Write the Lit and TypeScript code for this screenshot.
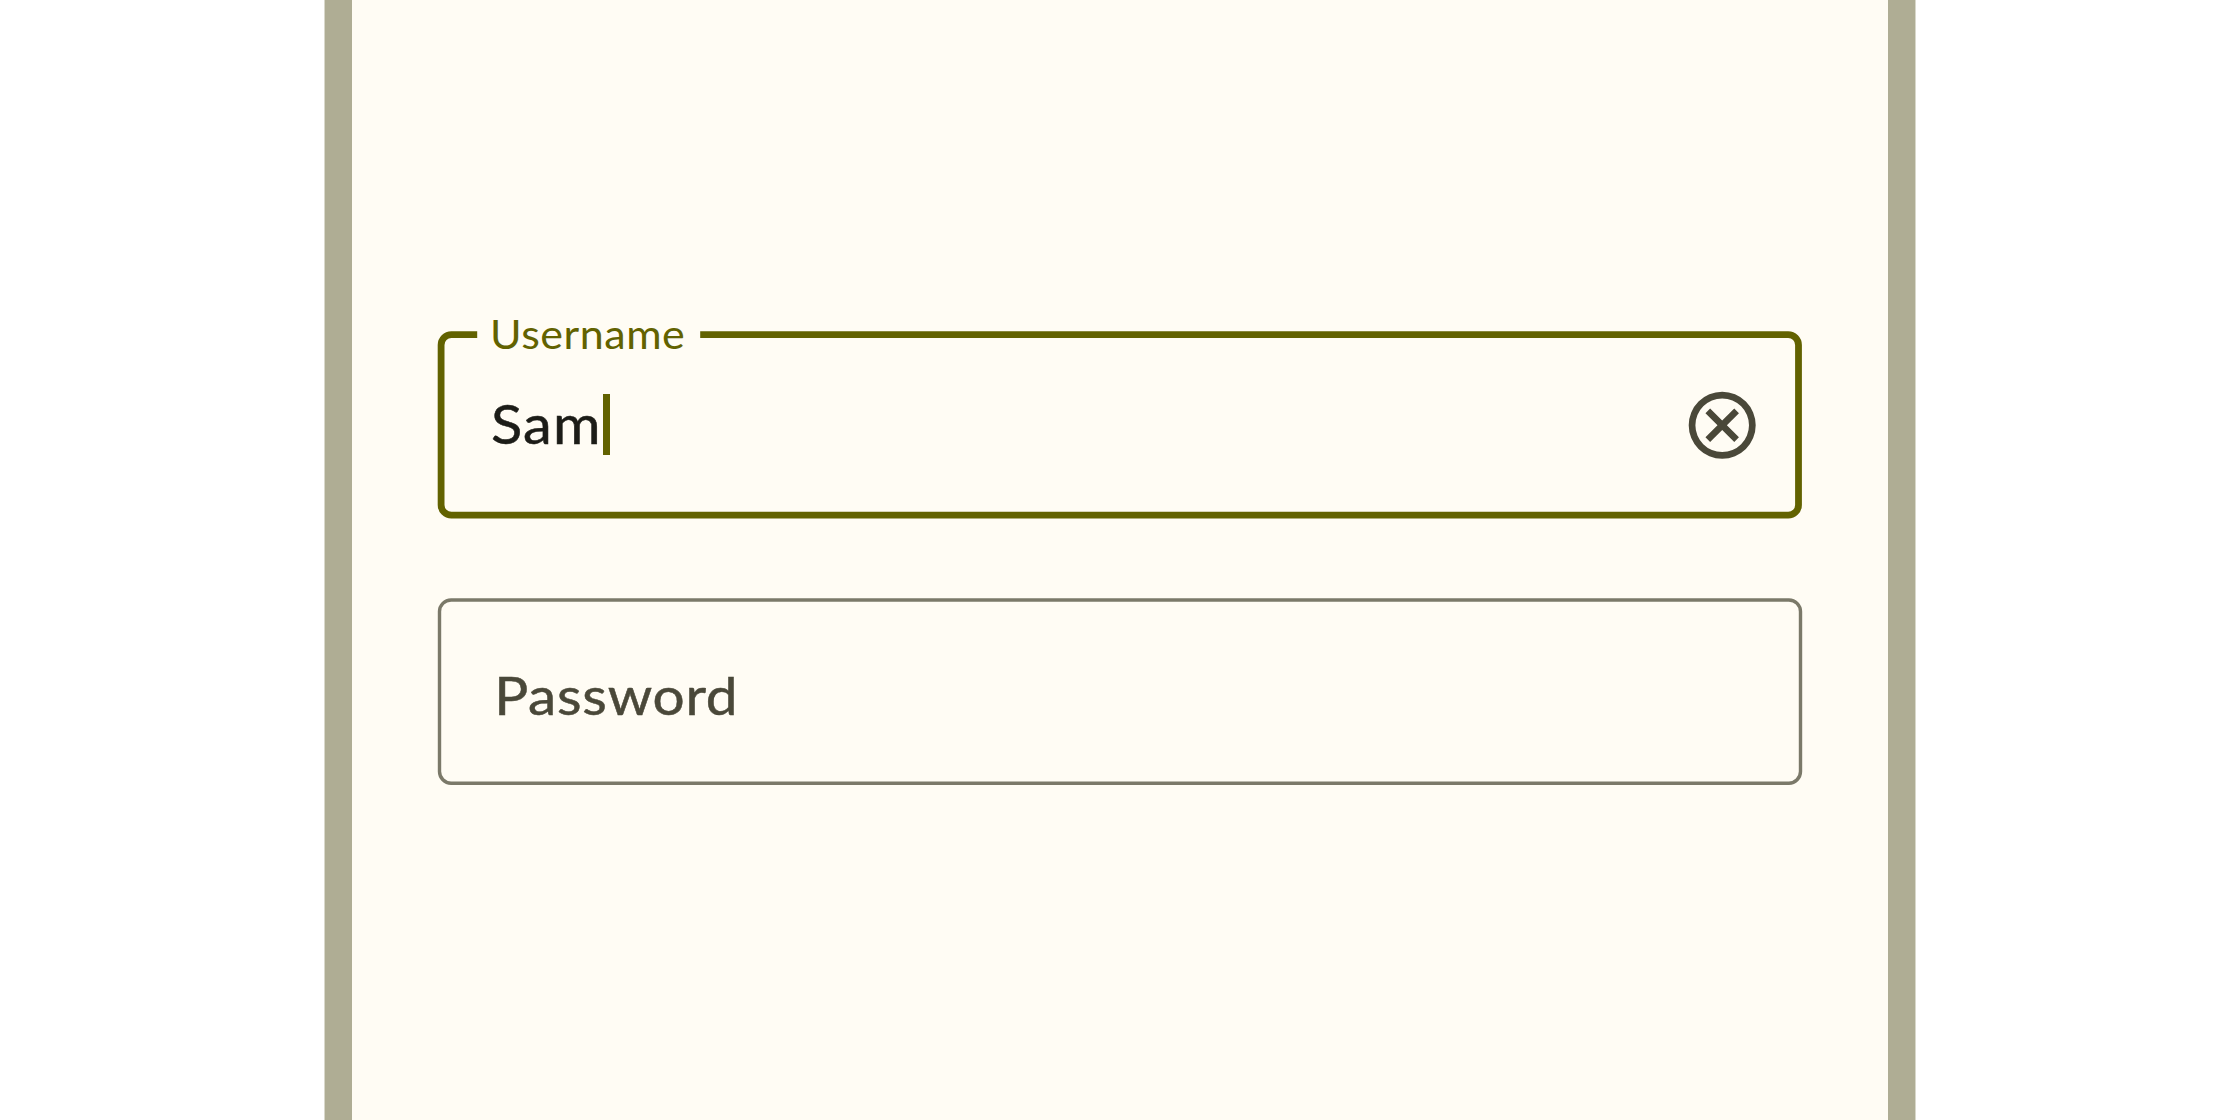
import { LitElement, html, css, svg, nothing } from "lit";
import { customElement, property } from "lit/decorators.js";

@customElement("outlined-field")
class OutlinedField extends LitElement {
  @property() label = "";
  @property() value = "";
  @property({ type: Boolean, reflect: true }) focused = false;

  static styles = css`
    :host {
      display: block;
      position: relative;
      width: 1366px;
      height: 188px;
    }
    .outline {
      position: absolute;
      inset: 0;
      width: 100%;
      height: 100%;
      fill: none;
      overflow: visible;
    }
    .thick { stroke: #626200; stroke-width: 6.8; }
    .thin { stroke: #7b7969; stroke-width: 3.4; }
    .label {
      position: absolute;
      left: 53.2px;
      top: -22.3px;
      font-size: 40.4px;
      line-height: 50px;
      letter-spacing: 0.5px;
      color: #626200;
      white-space: nowrap;
      transform: scaleX(1.065);
      transform-origin: left;
    }
    .content {
      display: flex;
      align-items: center;
      box-sizing: border-box;
      height: 100%;
      padding: 0 40.6px 0.6px 53.5px;
    }
    .value {
      margin-top: -1.5px;
      font-size: 54px;
      line-height: 64px;
      letter-spacing: 1.1px;
      color: #1c1c17;
      -webkit-text-stroke: 0.5px #1c1c17;
      transform: scaleX(1.07);
      transform-origin: left;
    }
    .caret {
      width: 7px;
      height: 60.5px;
      margin-left: 9px;
      background: #626200;
    }
    .clear {
      width: 80.4px;
      height: 80.4px;
      margin-left: auto;
      fill: #4a4839;
    }
    .placeholder {
      padding: 7.5px 0 0 3px;
      font-size: 53px;
      line-height: 64px;
      letter-spacing: 0.7px;
      color: #4a4839;
      -webkit-text-stroke: 0.5px #4a4839;
      transform: scaleX(1.07);
      transform-origin: left;
    }
  `;

  private renderOutline() {
    return this.focused
      ? svg`<path class="thick" d="M40.2 3.7H14.4A10.3 10.3 0 0 0 4.1 14V173.9A10.3 10.3 0 0 0 14.4 184.2H1351.2A10.3 10.3 0 0 0 1361.5 173.9V14A10.3 10.3 0 0 0 1351.2 3.7H263.2" />`
      : svg`<rect class="thin" x="2.5" y="2" width="1361" height="183.2" rx="11.6" />`;
  }

  render() {
    return html`
      <svg class="outline" viewBox="0 0 1366 188">${this.renderOutline()}</svg>
      ${this.focused ? html`<span class="label">${this.label}</span>` : nothing}
      <div class="content">
        ${this.focused
          ? html`
              <span class="value">${this.value}</span>
              <span class="caret"></span>
              <svg class="clear" viewBox="0 0 24 24">
                <path d="m8.4 17 3.6-3.6 3.6 3.6 1.4-1.4-3.6-3.6L17 8.4 15.6 7 12 10.6 8.4 7 7 8.4l3.6 3.6L7 15.6ZM12 22a10 10 0 1 1 0-20 10 10 0 0 1 0 20Zm0-2a8 8 0 1 0 0-16 8 8 0 0 0 0 16Z" />
              </svg>
            `
          : html`<span class="placeholder">${this.label}</span>`}
      </div>
    `;
  }
}

@customElement("app-root")
class AppRoot extends LitElement {
  static styles = css`
    :host {
      display: flex;
      justify-content: center;
      height: 1120px;
      overflow: hidden;
      background: #ffffff;
      font-family: Lato, "Open Sans", sans-serif;
    }
    .edge {
      display: flex;
      box-sizing: border-box;
      width: 1592px;
      padding: 0 1px;
      background: #d9d8cb;
    }
    .frame {
      display: flex;
      flex-direction: column;
      align-items: center;
      gap: 79px;
      box-sizing: border-box;
      width: 1590px;
      padding-top: 331px;
      border: solid #afad94;
      border-width: 0 27px;
      background: #fffcf4;
    }
  `;

  render() {
    return html`
      <div class="edge">
        <main class="frame">
          <outlined-field label="Username" value="Sam" focused></outlined-field>
          <outlined-field label="Password"></outlined-field>
        </main>
      </div>
    `;
  }
}
